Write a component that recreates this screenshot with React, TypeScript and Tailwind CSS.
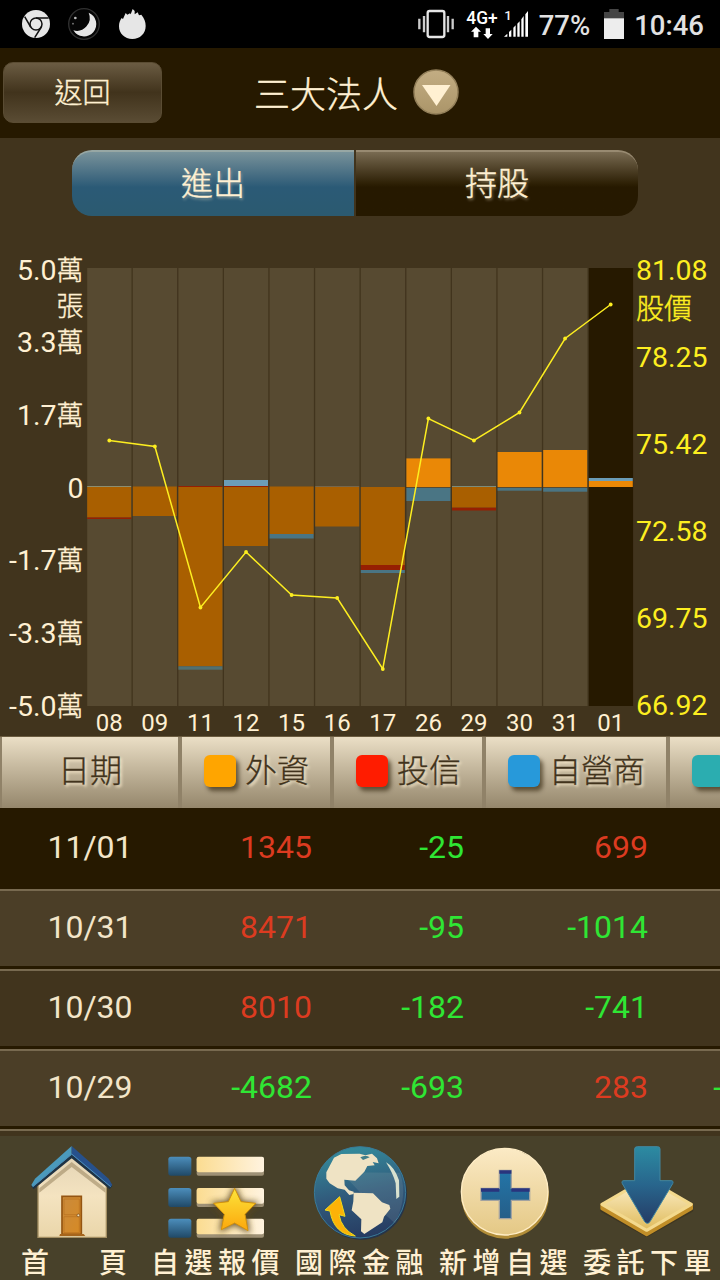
import { useState } from 'react';

interface Segment {
  from: number;
  to: number;
  color: string;
}

interface ChartDay {
  day: string;
  price: number;
  segments: Segment[];
}

const ORANGE = '#ea8806';
const DARK_ORANGE = '#a95f00';
const DARK_RED = '#961f02';
const BLUE = '#6b9db8';
const DARK_BLUE = '#4a7584';

const CHART_DAYS: ChartDay[] = [
  { day: '08', price: 440.5, segments: [{ from: 486, to: 487, color: '#8d8e70' }, { from: 487, to: 517.5, color: DARK_ORANGE }, { from: 517.5, to: 519, color: DARK_RED }] },
  { day: '09', price: 446.5, segments: [{ from: 486.5, to: 516, color: DARK_ORANGE }] },
  { day: '11', price: 607.5, segments: [{ from: 486, to: 487, color: DARK_RED }, { from: 487, to: 666.3, color: DARK_ORANGE }, { from: 666.3, to: 669.7, color: '#52706f' }] },
  { day: '12', price: 552, segments: [{ from: 480, to: 486, color: BLUE }, { from: 486, to: 487, color: DARK_RED }, { from: 487, to: 546, color: DARK_ORANGE }] },
  { day: '15', price: 595, segments: [{ from: 486.5, to: 534, color: DARK_ORANGE }, { from: 534, to: 538.5, color: DARK_BLUE }] },
  { day: '16', price: 598, segments: [{ from: 486, to: 487, color: '#77664a' }, { from: 487, to: 526.5, color: DARK_ORANGE }] },
  { day: '17', price: 669, segments: [{ from: 487, to: 565, color: DARK_ORANGE }, { from: 565, to: 570, color: DARK_RED }, { from: 570, to: 573, color: DARK_BLUE }] },
  { day: '26', price: 418.5, segments: [{ from: 458.4, to: 487, color: ORANGE }, { from: 488, to: 501, color: DARK_BLUE }] },
  { day: '29', price: 440.5, segments: [{ from: 486, to: 487, color: '#7d8c7b' }, { from: 487, to: 507.7, color: DARK_ORANGE }, { from: 507.7, to: 510.5, color: DARK_RED }] },
  { day: '30', price: 412.5, segments: [{ from: 452, to: 487, color: ORANGE }, { from: 488, to: 490.7, color: DARK_BLUE }] },
  { day: '31', price: 338.5, segments: [{ from: 450, to: 487, color: ORANGE }, { from: 488, to: 491.7, color: DARK_BLUE }] },
  { day: '01', price: 304.5, segments: [{ from: 478, to: 481, color: BLUE }, { from: 481, to: 487, color: ORANGE }] },
];

const LEFT_LABELS = [
  { num: '5.0', unit: '萬', y: 280 },
  { num: '', unit: '張', y: 316 },
  { num: '3.3', unit: '萬', y: 352 },
  { num: '1.7', unit: '萬', y: 425 },
  { num: '0', unit: '', y: 498 },
  { num: '-1.7', unit: '萬', y: 570 },
  { num: '-3.3', unit: '萬', y: 643 },
  { num: '-5.0', unit: '萬', y: 715.5 },
];

const RIGHT_LABELS = [
  { text: '81.08', y: 280 },
  { text: '78.25', y: 367 },
  { text: '75.42', y: 454 },
  { text: '72.58', y: 541 },
  { text: '69.75', y: 628 },
  { text: '66.92', y: 715 },
];

const HEADERS = [
  { label: '外資', width: 'w-[152px]', swatch: 'bg-[#ffa500]' },
  { label: '投信', width: 'w-[152px]', swatch: 'bg-[#ff1c00]' },
  { label: '自營商', width: 'w-[184px]', swatch: 'bg-[#2799da]' },
  { label: '合計', width: 'w-[146px]', swatch: 'bg-[#2badb0]' },
];

const ROWS = [
  { date: '11/01', values: ['1345', '-25', '699', '2019'] },
  { date: '10/31', values: ['8471', '-95', '-1014', '7362'] },
  { date: '10/30', values: ['8010', '-182', '-741', '7087'] },
  { date: '10/29', values: ['-4682', '-693', '283', '-5092'] },
];

function StatusBar() {
  return (
    <div className="flex h-12 items-center justify-between bg-black text-[27.5px] font-medium text-[#e2e2e2]">
      <svg width="160" height="48" viewBox="0 0 480 144">
        <circle cx="108" cy="72" r="42" fill="#e6e6e6" />
        <g stroke="#111" strokeWidth="4.500" fill="none">
          <circle cx="108" cy="72" r="18" />
          <path d="M108 54H146M92 81L74 50M124 81L104 113" />
        </g>
        <circle cx="252" cy="72" r="46" fill="#050505" stroke="#303030" strokeWidth="4" />
        <path d="M266 38A37 37 0 1 1 220 91A39 39 0 0 0 266 38Z" fill="#e6e6e6" />
        <circle cx="226" cy="54" r="4" fill="#bbb" />
        <circle cx="219" cy="71" r="2.5" fill="#888" />
        <path d="M357 79C357 68 360 61 365 54L369 57L377 39L382 44L390 40L392 43L398 27L404 33V43L413 37L417 46L424 44C433 55 437 65 437 78C437 101 420 117 397 117C374 117 357 101 357 79Z" fill="#e6e6e6" />
      </svg>
      <div className="flex items-center pr-4">
        <svg width="116" height="48" viewBox="48 0 348 144" className="mr-[5px]">
          <rect x="77" y="33" width="50" height="78" rx="6" fill="none" stroke="#e6e6e6" strokeWidth="7" />
          <path d="M52 56V88M66 48V97M138 48V97M152 56V88" stroke="#ccc" strokeWidth="7" />
          <text x="193" y="73" fontSize="54" fontWeight="500" fontFamily="Roboto, sans-serif" textLength="94" lengthAdjust="spacingAndGlyphs" fill="#fff">4G+</text>
          <path d="M222 80L237 95H229V112H215V95H207ZM258 117L272 102H264V85H251V102H244Z" fill="#fff" />
          <text x="307" y="61" fontSize="40" fontFamily="Roboto, sans-serif" fill="#eee">1</text>
          <path d="M306 110L316 101V110ZM321 110V96L328 89V110ZM334 110V83L341 76V110ZM346 110V71L353 64V110ZM358 110V58L365 48V110ZM370 110V43L378 33V110Z" fill="#fff" />
        </svg>
        <span className="pt-[3px]">77%</span>
        <svg width="20" height="30" viewBox="0 0 60 90" className="mr-[10px] ml-[14px]">
          <path d="M0 9H16V0H44V9H60V30H0Z" fill="#454545" />
          <rect y="28" width="60" height="62" fill="#ededed" />
        </svg>
        <span className="pt-[3px]">10:46</span>
      </div>
    </div>
  );
}

function TitleBar() {
  return (
    <header className="flex h-[90px] items-center bg-[#261900] text-[#fff0d2]">
      <button className="mb-px ml-[3px] h-[61px] w-[159px] rounded-[10px] border border-[#5a4c33] bg-linear-to-b from-[#6b5c43] via-[#41331c] to-[#5a4c34] pt-[3px] text-[28px] font-light [-webkit-text-stroke:0.4px]">
        返回
      </button>
      <h1 className="ml-[92px] pt-[6px] text-4xl font-light [-webkit-text-stroke:0.4px]">三大法人</h1>
      <svg width="48" height="48" viewBox="0 0 48 48" className="ml-[14px] -translate-y-px">
        <defs>
          <linearGradient id="drop" x1="0" y1="0" x2="0" y2="1">
            <stop offset="0" stopColor="#c3ad83" />
            <stop offset="1" stopColor="#ab9569" />
          </linearGradient>
        </defs>
        <circle cx="24" cy="24" r="22" fill="url(#drop)" stroke="#94805a" strokeWidth="1.5" />
        <path d="M10 17H38.500L24.500 38Z" fill="#fff0d2" />
      </svg>
    </header>
  );
}

function Tabs() {
  const [active, setActive] = useState('進出');
  const base = 'h-[66px] w-[282px] border-t-2 pb-px text-[32px] font-light text-[#fff0d2] [-webkit-text-stroke:0.4px] [text-shadow:1px_2px_3px_rgba(255,240,210,0.45)]';
  const on = 'border-[#97a7a4] bg-linear-to-b from-[#78929a] from-0% via-[#2b5a76] via-55% to-[#2b5a70]';
  const off = 'border-[#988a71] bg-linear-to-b from-[#796b52] from-0% via-[#261900] via-55% to-[#261900]';

  return (
    <div className="mt-3 ml-[72px] flex gap-[2px]">
      <button className={`${base} rounded-l-[20px] ${active === '進出' ? on : off}`} onClick={() => setActive('進出')}>
        進出
      </button>
      <button className={`${base} rounded-r-[20px] ${active === '持股' ? on : off}`} onClick={() => setActive('持股')}>
        持股
      </button>
    </div>
  );
}

function Chart() {
  const points = CHART_DAYS.map((d, i) => ({ x: 109.3 + i * 45.58, y: d.price }));

  return (
    <svg width="720" height="520" viewBox="0 216 720 520" className="block">
      {CHART_DAYS.map((d, i) => {
        const x = 87.2 + i * 45.6;
        return (
          <g key={d.day}>
            <rect x={x} y="268" width="44.300" height="438" fill={i === 11 ? '#261900' : '#574a31'} />
            {d.segments.map((s) => (
              <rect key={s.from} x={x} y={s.from} width="44" height={s.to - s.from} fill={s.color} />
            ))}
            <text x={x + 22} y="731" fontSize="24" textAnchor="middle" fill="#fff0d2">{d.day}</text>
          </g>
        );
      })}

      {/* Price line */}
      <polyline points={points.map((p) => `${p.x},${p.y}`).join(' ')} fill="none" stroke="#fdee20" strokeWidth="1.500" />
      {points.map((p) => (
        <circle key={p.x} cx={p.x} cy={p.y} r="1.900" fill="#fdee20" />
      ))}

      {/* Axes */}
      {LEFT_LABELS.map((l) => (
        <text key={l.y} x="83.500" y={l.y} fontSize="28.500" textAnchor="end" fill="#fff0d2">
          {l.num}
          {l.unit && <tspan fontSize="27" fontWeight="300" stroke="#fff0d2" strokeWidth="0.400">{l.unit}</tspan>}
        </text>
      ))}
      {RIGHT_LABELS.map((l) => (
        <text key={l.text} x="636" y={l.y} fontSize="28.500" fill="#fdee20">{l.text}</text>
      ))}
      <text x="636" y="319" fontSize="28" fontWeight="300" fill="#fdee20" stroke="#fdee20" strokeWidth="0.400">股價</text>
    </svg>
  );
}

function DataTable() {
  return (
    <div className="overflow-hidden">
      <div className="w-[814px]">
        <div className="flex h-[72px] border-t border-[#6b5c40] text-[32px] font-light text-[#41331c] [-webkit-text-stroke:0.3px] [text-shadow:2px_2px_3px_#fff0d2]">
          <div className="flex w-[180px] items-center justify-center border-r-2 border-l-2 border-[#908268] bg-linear-to-b from-[#ebdfc6] to-[#95876c] pb-[3px]">
            日期
          </div>
          {HEADERS.map((h) => (
            <div key={h.label} className={`flex shrink-0 items-center gap-[9px] border-x-2 border-[#908268] bg-linear-to-b from-[#ebdfc6] to-[#95876c] pb-[3px] pl-[22px] whitespace-nowrap ${h.width}`}>
              <span className={`h-8 w-8 shrink-0 rounded-md shadow-[3px_4px_4px_rgba(38,25,0,0.6)] ${h.swatch}`} />
              {h.label}
            </div>
          ))}
        </div>
        {ROWS.map((row, i) => (
          <div
            key={row.date}
            className={`flex items-center text-[32px] ${
              i === 0 ? 'h-[81px] bg-[#261900] pb-[3px]' : 'h-20 border-t-2 border-b-3 border-t-[#786a50] border-b-[#261900] pb-[3px]'
            } ${i % 2 ? 'bg-[#4b3e27]' : i ? 'bg-[#41341d]' : ''}`}
          >
            <div className="w-[180px] text-center text-[#f3e5c9]">{row.date}</div>
            {row.values.map((v, j) => (
              <div
                key={HEADERS[j].label}
                className={`pr-5 text-right ${HEADERS[j].width} ${v.startsWith('-') ? 'text-[#2fe634]' : 'text-[#dc3b20]'}`}
              >
                {v}
              </div>
            ))}
          </div>
        ))}
        <div className="h-[7px] border-t-2 border-[#786a50] bg-[#41341d]" />
      </div>
    </div>
  );
}

function HouseIcon() {
  return (
    <svg width="144" height="108" viewBox="0 48 432 324">
      <defs>
        <linearGradient id="wall" x1="0" y1="0" x2="0" y2="1">
          <stop offset="0" stopColor="#e3d4b5" />
          <stop offset=".5" stopColor="#f4e3c0" />
          <stop offset="1" stopColor="#ead6aa" />
        </linearGradient>
        <linearGradient id="door" x1="0" y1="0" x2="1" y2="1">
          <stop offset="0" stopColor="#c98a3c" />
          <stop offset="1" stopColor="#d78a24" />
        </linearGradient>
      </defs>
      <path d="M114 352V195L215 105L319 195V352Z" fill="url(#wall)" stroke="#a38e62" strokeWidth="4" />
      <path d="M118 205L215 126L316 205V218L215 141L118 218Z" fill="#97845c" opacity=".55" />
      <rect x="186" y="229" width="58" height="114" fill="url(#door)" stroke="#945512" strokeWidth="5" />
      <path d="M192 237H238V284H192ZM192 290H238V338H192Z" fill="none" stroke="#b8701f" strokeWidth="2" />
      <path d="M180 342H251L256 348H178Z" fill="#a6651c" />
      <circle cx="235" cy="286" r="4" fill="#f6e5c0" stroke="#6e4310" strokeWidth="2" />
      <path d="M97 203L215 107L333 203" fill="none" stroke="#1f3344" strokeWidth="12" />
      <path d="M215 78L105 176L94 195L99 201L215 104Z" fill="#4b9abc" />
      <path d="M215 78L326 176L337 195L331 201L215 104Z" fill="#27518c" />
      <path d="M98 200L215 102L332 200" fill="none" stroke="#4b8db8" strokeWidth="3" />
    </svg>
  );
}

function ListIcon() {
  return (
    <svg width="144" height="108" viewBox="432 48 432 324">
      <defs>
        <linearGradient id="cell" x1="0" y1="0" x2="0" y2="1">
          <stop offset="0" stopColor="#4c8ebc" />
          <stop offset="1" stopColor="#204967" />
        </linearGradient>
        <linearGradient id="strip">
          <stop offset="0" stopColor="#fbdc91" />
          <stop offset="1" stopColor="#fff3df" />
        </linearGradient>
        <linearGradient id="star" x1="0" y1="0" x2="0" y2="1">
          <stop offset="0" stopColor="#fce43b" />
          <stop offset="1" stopColor="#fca70b" />
        </linearGradient>
        <filter id="soft" x="-40%" y="-40%" width="180%" height="180%">
          <feGaussianBlur stdDeviation="9" />
        </filter>
      </defs>
      {[110, 204, 296].map((y) => (
        <g key={y}>
          <rect x="505" y={y} width="69" height="57" rx="8" fill="url(#cell)" />
          <rect x="590" y={y + 2} width="202" height="55" rx="6" fill="#9e9176" />
          <rect x="590" y={y} width="202" height="47" rx="6" fill="url(#strip)" />
        </g>
      ))}
      <path d="M704 205L723 247L767 251L735 284L744 332L704 309L664 329L673 283L641 251L685 247Z" fill="#5b471c" stroke="#5b471c" strokeWidth="10" opacity=".9" filter="url(#soft)" />
      <path d="M704 205L723 245L767 250L735 283L744 332L704 309L664 329L673 283L641 250L685 245Z" fill="url(#star)" stroke="#d2910c" strokeWidth="3" strokeLinejoin="round" />
    </svg>
  );
}

function GlobeIcon() {
  return (
    <svg width="144" height="108" viewBox="-6 48 432 324">
      <defs>
        <linearGradient id="sea" x1=".4" y1="0" x2=".6" y2="1">
          <stop offset="0" stopColor="#348c9c" />
          <stop offset=".5" stopColor="#315b7c" />
          <stop offset="1" stopColor="#263a60" />
        </linearGradient>
      </defs>
      <circle cx="214" cy="222" r="137" fill="#25344a" />
      <circle cx="210" cy="217" r="137" fill="url(#sea)" stroke="#397b99" strokeWidth="3" />
      <path d="M210 217L154 157L330 158Q355 228 315 310Z" fill="#8aa5ab" opacity=".2" />
      <path d="M109 157L132 113L154 102L209 101L226 106L246 101L261 115L266 130L248 126L254 136L232 138L223 155L196 182L163 179L164 196L177 211L191 215V222L178 225L164 209L143 205L119 190L109 176Z" fill="#efe3c4" />
      <path d="M211 112Q228 103 239 112L219 120Z" fill="#417f89" />
      <path d="M191 218L249 220L276 247L298 255L301 266L282 290L277 307L223 342L213 334L214 298L185 271L190 244Z" fill="#efe3c4" />
      <path d="M288 127Q313 140 327 181L328 230L319 237L317 190Q310 162 288 127Z" fill="#d9e2cf" />
      <path d="M149 230L165 289L147 284Q154 326 196 348Q132 344 120 273L105 270Z" fill="#fcb207" stroke="#efdb1d" strokeWidth="3" strokeLinejoin="round" />
    </svg>
  );
}

function AddIcon() {
  return (
    <svg width="144" height="108" viewBox="426 48 432 324">
      <defs>
        <linearGradient id="coin" x1="0" y1="0" x2="0" y2="1">
          <stop offset="0" stopColor="#fbeac5" />
          <stop offset="1" stopColor="#e4c885" />
        </linearGradient>
        <linearGradient id="plus" x1="0" y1="0" x2="0" y2="1">
          <stop offset="0" stopColor="#2375a8" />
          <stop offset="1" stopColor="#255e88" />
        </linearGradient>
      </defs>
      <circle cx="645" cy="224" r="132" fill="#b28d38" />
      <circle cx="644" cy="215" r="130" fill="url(#coin)" stroke="#ffedc5" strokeWidth="4" />
      <path d="M628 151H664V205H719V241H664V296H628V241H573V205H628Z" fill="url(#plus)" stroke="#a2a2a0" strokeWidth="4" />
      <path d="M628 151H664V161H628ZM573 205H628V215H573ZM664 205H719V215H664Z" fill="#29347d" />
    </svg>
  );
}

function OrderIcon() {
  return (
    <svg width="144" height="108" viewBox="48 288 432 324">
      <defs>
        <linearGradient id="arrow" x1="0" y1="0" x2="0" y2="1">
          <stop offset="0" stopColor="#2c8ba2" />
          <stop offset=".5" stopColor="#28658c" />
          <stop offset="1" stopColor="#253c66" />
        </linearGradient>
        <linearGradient id="plate" x1="0" y1="0" x2="0" y2="1">
          <stop offset="0" stopColor="#fff3d2" />
          <stop offset="1" stopColor="#dfbb5b" />
        </linearGradient>
      </defs>
      <path d="M129 503L260 430L393 503V510L260 584L127 510Z" fill="#302714" opacity=".4" stroke="#302714" strokeWidth="14" strokeLinejoin="round" />
      <path d="M126 493H394V506L260 584L126 506Z" fill="#c18e28" stroke="#c18e28" strokeWidth="10" strokeLinejoin="round" />
      <path d="M126 493L260 415L394 493L260 571Z" fill="url(#plate)" stroke="#f3d98d" strokeWidth="9" strokeLinejoin="round" />
      <path d="M232 320H293Q300 320 300 327V422H333Q342 422 338 431L270 545Q262 555 254 545L187 431Q183 422 192 422H224V327Q224 320 232 320Z" fill="url(#arrow)" stroke="#4287a0" strokeWidth="3" />
    </svg>
  );
}

const NAV_ITEMS = [
  { label: '首頁', icon: HouseIcon },
  { label: '自選報價', icon: ListIcon },
  { label: '國際金融', icon: GlobeIcon },
  { label: '新增自選', icon: AddIcon },
  { label: '委託下單', icon: OrderIcon },
];

function BottomNav() {
  return (
    <nav className="flex h-36 bg-[#48412a]">
      {NAV_ITEMS.map(({ label, icon: Icon }) => (
        <div key={label} className="w-36">
          <Icon />
          <div className="flex h-9 items-center pt-[3px] pl-[7px] text-[28px] font-medium text-[#fff0d2]">
            {label.length === 2 ? (
              <span className="flex w-full justify-between pr-[17px] pl-[14px]">
                <span>首</span>
                <span>頁</span>
              </span>
            ) : (
              <span className="tracking-[5.500px] whitespace-nowrap">{label}</span>
            )}
          </div>
        </div>
      ))}
    </nav>
  );
}

export default function App() {
  return (
    <div className="flex h-[1280px] w-[720px] flex-col overflow-hidden bg-[#41341d] font-['Roboto','Noto_Sans_CJK_TC',sans-serif]">
      <StatusBar />
      <TitleBar />
      <Tabs />
      <Chart />
      <DataTable />
      <BottomNav />
    </div>
  );
}
